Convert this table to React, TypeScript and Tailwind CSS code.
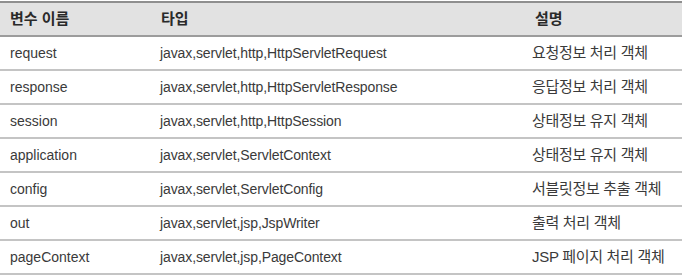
const rows = [
  ["request", "javax,servlet,http,HttpServletRequest", "요청정보 처리 객체"],
  ["response", "javax,servlet,http,HttpServletResponse", "응답정보 처리 객체"],
  ["session", "javax,servlet,http,HttpSession", "상태정보 유지 객체"],
  ["application", "javax,servlet,ServletContext", "상태정보 유지 객체"],
  ["config", "javax,servlet,ServletConfig", "서블릿정보 추출 객체"],
  ["out", "javax,servlet,jsp,JspWriter", "출력 처리 객체"],
  ["pageContext", "javax,servlet,jsp,PageContext", "JSP 페이지 처리 객체"],
]

export default function App() {
  return (
    <div
      className="w-[682px] h-[277px] bg-white pt-[1px] text-[#3a3a3a] text-[14px]"
      style={{ fontFamily: '"Liberation Sans", "Noto Sans CJK KR", sans-serif' }}
    >
      <div className="border-t-2 border-[#8f8f8f]">
        <div className="flex h-[34px] items-center bg-[#e2e2e2] border-b-2 border-[#9c9c9c] font-bold text-[15px] text-[#2a2a2a]">
          <div className="w-[160px] pl-[10px]">변수 이름</div>
          <div className="w-[375px] pl-[1px]">타입</div>
          <div className="flex-1">설명</div>
        </div>
        {rows.map((r, i) => (
          <div key={i} className="flex h-[34px] items-center border-b-2 border-[#c4c4c4]">
            <div className="w-[160px] pl-[10px]">{r[0]}</div>
            <div className="w-[372px] tracking-[-0.1px]">{r[1]}</div>
            <div className="flex-1 text-[15px] tracking-[-0.3px]">{r[2]}</div>
          </div>
        ))}
      </div>
    </div>
  )
}
